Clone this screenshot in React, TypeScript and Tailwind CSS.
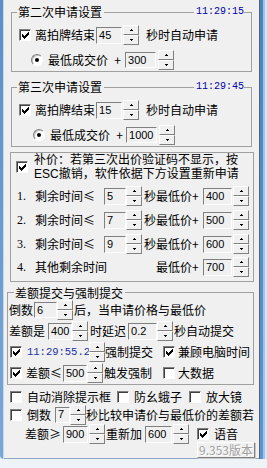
import React from "react";

// 经典 Win 复选框里的勾，按像素画
const TICK = ["......#", ".....##", "#...###", "##.###.", "#####..", ".###...", "..#...."];

function Check({ on = false }: { on?: boolean }) {
  return (
    <span className="flex h-[12px] w-[12px] shrink-0 items-center justify-center border border-b-white border-l-[#808080] border-r-white border-t-[#808080] bg-white shadow-[inset_1px_1px_0_#404040]">
      {on && (
        <svg width="7" height="7" viewBox="0 0 7 7" shapeRendering="crispEdges">
          {TICK.flatMap((row, y) =>
            row.split("").map((c, x) => (c === "#" ? <rect key={x + "-" + y} x={x} y={y} width="1" height="1" fill="#000" /> : null))
          )}
        </svg>
      )}
    </span>
  );
}

function Radio() {
  return (
    <span className="flex h-[12px] w-[12px] shrink-0 items-center justify-center rounded-full border border-b-white border-l-[#808080] border-r-white border-t-[#808080] bg-white shadow-[inset_1px_1px_0_#c0c0c0]">
      <span className="h-[4px] w-[4px] rounded-full bg-black" />
    </span>
  );
}

function Field({ v, className }: { v: string; className: string }) {
  return (
    <span
      className={
        "flex shrink-0 items-center border border-b-white border-l-[#808080] border-r-white border-t-[#808080] pl-[2px] font-['Liberation_Sans',sans-serif] text-[11px] leading-none " +
        className
      }
    >
      {v}
    </span>
  );
}

function Half({ up = false }: { up?: boolean }) {
  return (
    <span className="flex flex-1 items-center justify-center border border-b-[#808080] border-l-white border-r-[#808080] border-t-white bg-[#f0f0f0]">
      <svg width="3" height="2" viewBox="0 0 3 2" shapeRendering="crispEdges">
        <path d={up ? "M1 0h1v1h1v1H0V1h1z" : "M0 0h3v1H2v1H1V1H0z"} fill="#000" />
      </svg>
    </span>
  );
}

function Spin({ className = "" }: { className?: string }) {
  return (
    <span className={"flex h-[20px] w-[16px] shrink-0 flex-col " + className}>
      <Half up />
      <Half />
    </span>
  );
}

const T = ({ children, className = "" }: { children: React.ReactNode; className?: string }) => (
  <span className={"shrink-0 whitespace-nowrap leading-none " + className}>{children}</span>
);

export default function App() {
  return (
    <div className="h-[468px] w-[267px] overflow-hidden bg-[#eef3f8] font-['Noto_Sans_CJK_SC','Liberation_Sans',sans-serif] text-[12px] text-black">
      <div className="flex h-[459px]">
        <div className="flex w-[4px] shrink-0 overflow-hidden rounded-bl-[6px]">
          <div className="w-[3px] bg-gradient-to-b from-[#5b8fc6] to-[#7aa8d6]" />
          <div className="w-[1px] bg-[#c6d8ea]" />
        </div>

        <div className="flex w-[255px] shrink-0 flex-col border-b border-[#8ea8c2] bg-[#f0f0f0]">
          {/* 第二次申请设置 */}
          <div className="ml-[7px] mt-[3px] w-[241px]">
            <div className="flex h-[18px] items-center">
              <span className="h-[9px] w-[6px] self-end border-l border-t border-[#a0a0a0]" />
              <T className="ml-[1px]">第二次申请设置</T>
              <span className="mx-[2px] h-[9px] flex-1 self-end border-t border-[#a0a0a0]" />
              <T className="font-['Liberation_Mono',monospace] text-[10px] text-[#0000a8]">11:29:15</T>
              <span className="h-[9px] w-[8px] self-end border-r border-t border-[#a0a0a0]" />
            </div>
            <div className="flex h-[51px] flex-col border-b border-l border-r border-[#a0a0a0]">
              <div className="mt-[4px] flex h-[20px] items-center">
                <span className="ml-[7px]"><Check on /></span>
                <T className="ml-[4px]">离拍牌结束</T>
                <Field v="45" className="ml-[1px] h-[17px] w-[26px]" />
                <Spin className="ml-[1px]" />
                <T className="ml-[7px]">秒时自动申请</T>
              </div>
              <div className="mt-[5px] flex h-[20px] items-center">
                <span className="ml-[19px]"><Radio /></span>
                <T className="ml-[5px]">最低成交价</T>
                <T className="ml-[6px] w-[7px] text-center">+</T>
                <Field v="300" className="ml-[4px] h-[16px] w-[31px]" />
                <Spin className="ml-[2px]" />
              </div>
            </div>
          </div>

          {/* 第三次申请设置 */}
          <div className="ml-[7px] mt-[6px] w-[241px]">
            <div className="flex h-[18px] items-center">
              <span className="h-[9px] w-[6px] self-end border-l border-t border-[#a0a0a0]" />
              <T className="ml-[1px]">第三次申请设置</T>
              <span className="mx-[2px] h-[9px] flex-1 self-end border-t border-[#a0a0a0]" />
              <T className="font-['Liberation_Mono',monospace] text-[10px] text-[#0000a8]">11:29:45</T>
              <span className="h-[9px] w-[8px] self-end border-r border-t border-[#a0a0a0]" />
            </div>
            <div className="flex h-[51px] flex-col border-b border-l border-r border-[#a0a0a0]">
              <div className="mt-[4px] flex h-[20px] items-center">
                <span className="ml-[7px]"><Check on /></span>
                <T className="ml-[4px]">离拍牌结束</T>
                <Field v="15" className="ml-[1px] h-[17px] w-[26px]" />
                <Spin className="ml-[1px]" />
                <T className="ml-[7px]">秒时自动申请</T>
              </div>
              <div className="mt-[5px] flex h-[20px] items-center">
                <span className="ml-[21px]"><Radio /></span>
                <T className="ml-[5px]">最低成交价</T>
                <T className="ml-[6px] w-[7px] text-center">+</T>
                <Field v="1000" className="ml-[3px] h-[16px] w-[31px]" />
                <Spin className="ml-[2px]" />
              </div>
            </div>
          </div>

          {/* 补价 */}
          <div className="ml-[6px] mt-[5px] flex h-[130px] w-[244px] flex-col border border-[#a0a0a0]">
            <div className="flex items-center">
              <span className="ml-[5px]"><Check on /></span>
              <span className="ml-[6px] flex flex-col whitespace-nowrap font-['Liberation_Sans','Noto_Sans_CJK_SC',sans-serif]">
                <span className="h-[14px] leading-[14px]">补价：若第三次出价验证码不显示，按</span>
                <span className="h-[14px] leading-[14px]">ESC撤销，软件依据下方设置重新申请</span>
              </span>
            </div>
            {[
              ["1.", "5", "400"],
              ["2.", "7", "500"],
              ["3.", "9", "600"],
            ].map(([n, s, p], i) => (
              <div key={n} className={"flex h-[20px] items-center " + (i === 0 ? "mt-[5px]" : "mt-[4px]")}>
                <T className="ml-[6px] w-[18px] font-['Liberation_Serif',serif] text-[12px]">{n}</T>
                <T className="w-[60px]">剩余时间≤</T>
                <Field v={s} className="ml-[9px] h-[17px] w-[22px]" />
                <Spin />
                <T className="ml-[2px] w-[59px]">秒最低价+</T>
                <Field v={p} className="h-[17px] w-[29px]" />
                <Spin className="ml-[1px]" />
              </div>
            ))}
            <div className="mt-[3px] flex h-[20px] items-center">
              <T className="ml-[6px] w-[18px] font-['Liberation_Serif',serif] text-[12px]">4.</T>
              <T className="w-[72px]">其他剩余时间</T>
              <T className="ml-[49px] w-[47px]">最低价+</T>
              <Field v="700" className="h-[17px] w-[29px]" />
              <Spin className="ml-[1px]" />
            </div>
          </div>

          {/* 差额提交与强制提交 */}
          <div className="ml-[3px] mt-[2px] w-[247px]">
            <div className="flex h-[17px] items-center">
              <span className="h-[9px] w-[7px] self-end border-l border-t border-[#a0a0a0]" />
              <T className="ml-[1px]">差额提交与强制提交</T>
              <span className="ml-[2px] h-[9px] flex-1 self-end border-r border-t border-[#a0a0a0]" />
            </div>
            <div className="flex h-[84px] flex-col gap-[3px] border-b border-l border-r border-[#a0a0a0]">
              <div className="flex h-[18px] items-center">
                <T className="ml-[1px]">倒数</T>
                <Field v="6" className="ml-[1px] h-[16px] w-[23px]" />
                <Spin />
                <T className="ml-[1px]">后，当申请价格与最低价</T>
              </div>
              <div className="flex h-[18px] items-center">
                <T className="ml-[1px]">差额是</T>
                <Field v="400" className="ml-[3px] h-[17px] w-[24px]" />
                <Spin />
                <T className="ml-[2px]">时延迟</T>
                <Field v="0.2" className="ml-[2px] h-[17px] w-[29px]" />
                <Spin />
                <T className="ml-[1px]">秒自动提交</T>
              </div>
              <div className="flex h-[18px] items-center">
                <span className="ml-[2px]"><Check on /></span>
                <T className="ml-[5px] w-[62px] font-['Liberation_Mono',monospace] text-[10.5px] text-[#1a2fa8]">11:29:55.2</T>
                <Spin />
                <T>强制提交</T>
                <span className="ml-[10px]"><Check on /></span>
                <T className="ml-[3px]">兼顾电脑时间</T>
              </div>
              <div className="flex h-[18px] items-center">
                <span className="ml-[2px]"><Check on /></span>
                <T className="ml-[4px] w-[36px]">差额≤</T>
                <Field v="500" className="ml-[1px] h-[17px] w-[24px]" />
                <Spin />
                <T className="ml-[1px]">触发强制</T>
                <span className="ml-[11px]"><Check /></span>
                <T className="ml-[3px]">大数据</T>
              </div>
            </div>
          </div>

          {/* 其他选项 */}
          <div className="mt-[4px] flex h-[16px] items-center">
            <span className="ml-[6px]"><Check /></span>
            <T className="ml-[5px]">自动消除提示框</T>
            <span className="ml-[6px]"><Check /></span>
            <T className="ml-[5px]">防幺蛾子</T>
            <span className="ml-[7px]"><Check /></span>
            <T className="ml-[5px]">放大镜</T>
          </div>
          <div className="mt-[1px] flex h-[17px] items-center">
            <span className="ml-[6px]"><Check /></span>
            <T className="ml-[5px]">倒数</T>
            <Field v="7" className="ml-[4px] h-[16px] w-[15px]" />
            <Spin />
            <T>秒比较申请价与最低价的差额若</T>
          </div>
          <div className="mt-[2px] flex h-[18px] items-center">
            <T className="ml-[21px] w-[36px]">差额≥</T>
            <Field v="900" className="ml-[2px] h-[17px] w-[25px]" />
            <Spin className="ml-[1px]" />
            <T className="ml-[1px]">重新加</T>
            <Field v="600" className="ml-[3px] h-[17px] w-[27px]" />
            <Spin className="ml-[1px]" />
            <span className="ml-[8px]"><Check on /></span>
            <T className="ml-[5px]">语音</T>
          </div>
          <div className="-mt-[1px] flex">
            <span className="ml-[193px] flex h-[16px] w-[58px] items-center justify-center border border-b-[#808080] border-l-white border-r-[#808080] border-t-white bg-[#f0f0f0] leading-none text-[#a0a0a0] shadow-[1px_1px_0_#c8c8c8] [text-shadow:1px_1px_0_#fff]">
              9.353版本
            </span>
          </div>
        </div>

        <div className="flex w-[8px] shrink-0">
          <div className="w-[1px] bg-[#56626f]" />
          <div className="w-[3px] bg-gradient-to-b from-[#4a84c0] to-[#5f95cc]" />
          <div className="w-[2px] bg-[#9fc4e8]" />
          <div className="w-[2px] bg-[#d6e6f5]" />
        </div>
      </div>
    </div>
  );
}
